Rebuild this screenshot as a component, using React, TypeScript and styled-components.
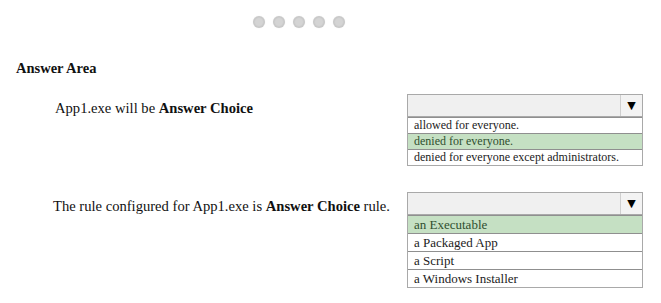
import styled, { createGlobalStyle } from "styled-components";

const GlobalStyle = createGlobalStyle`
  html, body {
    margin: 0;
    padding: 0;
    background: #ffffff;
  }
`;

type Question = {
  before: string;
  choice: string;
  after?: string;
  indent: number;
  options: string[];
  selected: number;
  small?: boolean;
};

const questions: Question[] = [
  {
    before: "App1.exe will be ",
    choice: "Answer Choice",
    indent: 55,
    options: [
      "allowed for everyone.",
      "denied for everyone.",
      "denied for everyone except administrators.",
    ],
    selected: 1,
    small: true,
  },
  {
    before: "The rule configured for App1.exe is ",
    choice: "Answer Choice",
    after: " rule.",
    indent: 53,
    options: ["an Executable", "a Packaged App", "a Script", "a Windows Installer"],
    selected: 0,
  },
];

const App = () => {
  return (
    <Page>
      <GlobalStyle />
      <Dots>
        {[0, 1, 2, 3, 4].map((i) => (
          <Dot key={i} />
        ))}
      </Dots>
      <Heading>Answer Area</Heading>
      <Questions>
        {questions.map((q, qi) => (
          <Row key={qi}>
            <Label $indent={q.indent}>
              {q.before}
              <strong>{q.choice}</strong>
              {q.after}
            </Label>
            <Dropdown>
              <SelectBar>
                <SelectValue />
                <ArrowCell>▼</ArrowCell>
              </SelectBar>
              <OptionList>
                {q.options.map((o, oi) => (
                  <Option key={o} $selected={oi === q.selected} $small={q.small}>
                    {o}
                  </Option>
                ))}
              </OptionList>
            </Dropdown>
          </Row>
        ))}
      </Questions>
    </Page>
  );
};

export default App;

const serif = `"Liberation Serif", "DejaVu Serif", "Times New Roman", Times, serif`;

const Page = styled.div`
  width: 661px;
  height: 303px;
  box-sizing: border-box;
  padding-top: 16px;
  overflow: hidden;
  font-family: ${serif};
  color: #111;
`;

const Dots = styled.div`
  display: flex;
  gap: 8px;
  padding-left: 253px;
`;

const Dot = styled.span`
  width: 12px;
  height: 12px;
  border-radius: 50%;
  background: radial-gradient(circle at 50% 50%, #d4d4d4 0 40%, #c8c8c8 60%, #bdbdbd 100%);
  box-shadow: 0 0 1px #d8d8d8;
`;

const Heading = styled.h2`
  margin: 0;
  padding: 30px 0 0 16px;
  font-family: ${serif};
  font-size: 14.5px;
  font-weight: bold;
  line-height: 20px;
`;

const Questions = styled.div`
  display: flex;
  flex-direction: column;
  gap: 26px;
  padding-top: 16px;
`;

const Row = styled.div`
  display: grid;
  grid-template-columns: 407px 236px;
  align-items: start;
`;

const Label = styled.div<{ $indent: number }>`
  padding-left: ${(p) => p.$indent}px;
  padding-top: 5px;
  font-family: ${serif};
  font-size: 14.6px;
  line-height: 18px;
  strong {
    font-weight: bold;
  }
`;

const Dropdown = styled.div`
  display: flex;
  flex-direction: column;
`;

const SelectBar = styled.div`
  display: flex;
  height: 23px;
  box-sizing: border-box;
  border: 1px solid #a9a9a9;
  background: #f0f0f0;
`;

const SelectValue = styled.div`
  flex: 1;
`;

const ArrowCell = styled.div`
  width: 21px;
  border-left: 1px solid #cfcfcf;
  background: #f3f3f3;
  display: flex;
  align-items: center;
  justify-content: center;
  font-family: "DejaVu Sans", sans-serif;
  font-size: 11px;
  color: #000;
`;

const OptionList = styled.div`
  display: flex;
  flex-direction: column;
  border: 1px solid #a9a9a9;
  border-top: none;
`;

const Option = styled.div<{ $selected: boolean; $small?: boolean }>`
  height: ${(p) => (p.$small ? 15 : 17)}px;
  line-height: ${(p) => (p.$small ? 15 : 17)}px;
  padding-left: 6px;
  font-family: ${serif};
  font-size: ${(p) => (p.$small ? 12 : 13)}px;
  color: ${(p) => (p.$selected ? "#2f4f2f" : "#222")};
  background: ${(p) => (p.$selected ? "#c5e0c3" : "#fff")};
  border-top: 1px solid #8f8f8f;
  white-space: nowrap;
`;
